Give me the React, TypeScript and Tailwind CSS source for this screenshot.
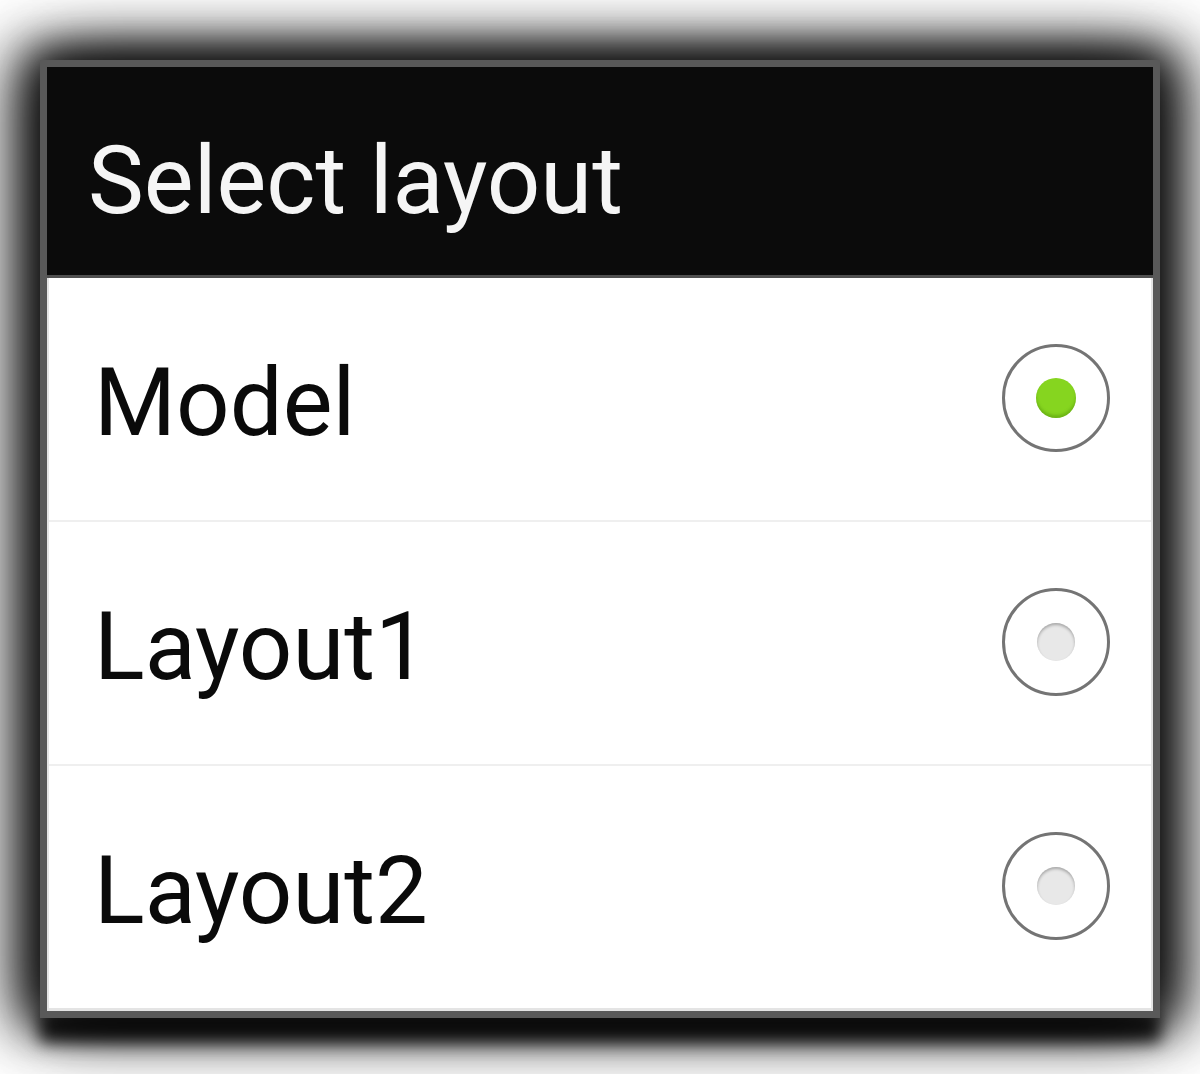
const items = [
  { label: "Model", selected: true },
  { label: "Layout1", selected: false },
  { label: "Layout2", selected: false },
];

function Radio({ selected }: { selected: boolean }) {
  return (
    <div className="mb-[10px] flex h-[108px] w-[108px] shrink-0 items-center justify-center rounded-full border-[3px] border-[#747474] bg-white">
      {selected ? (
        <div className="h-[40px] w-[40px] rounded-full bg-[#86d51f] shadow-[inset_0_-3px_3px_rgba(60,120,0,0.35)]" />
      ) : (
        <div className="h-[38px] w-[38px] rounded-full bg-[#e8e8e8] shadow-[inset_0_2px_3px_rgba(0,0,0,0.28)]" />
      )}
    </div>
  );
}

export default function App() {
  return (
    <div className="h-[1074px] w-[1200px] overflow-hidden bg-white pl-[40px] pt-[60px] font-['Roboto','Liberation_Sans',sans-serif]">
      <div className="relative z-10 w-[1120px] border-[7px] border-[#595959] shadow-[0_0_40px_8px_rgba(0,0,0,0.9),-26px_0_60px_6px_rgba(0,0,0,0.7),26px_0_60px_6px_rgba(0,0,0,0.7)]">
        <div className="h-[211px] border-b-[3px] border-[#505050] bg-[#0b0b0b] pl-[41px] pt-[67px]">
          <h1 className="text-[94px] leading-none text-[#f5f5f5]">Select layout</h1>
        </div>
        <div className="border-x-2 border-b-[3px] border-[#e4e4e4] bg-white">
          {items.map((item, i) => (
            <div
              key={item.label}
              className={
                i < items.length - 1
                  ? "flex h-[244px] items-center justify-between border-b-2 border-[#efefef] pl-[45px] pr-[41px] pt-[8px]"
                  : "flex h-[242px] items-center justify-between pl-[45px] pr-[41px] pt-[8px]"
              }
            >
              <span className="text-[94px] leading-none text-[#0a0a0a]">{item.label}</span>
              <Radio selected={item.selected} />
            </div>
          ))}
        </div>
      </div>
      {/* nav bar showing through underneath */}
      <div className="-mt-[6px] h-[30px] w-[1120px] bg-[#2c2c2c] blur-[8px]" />
    </div>
  );
}
